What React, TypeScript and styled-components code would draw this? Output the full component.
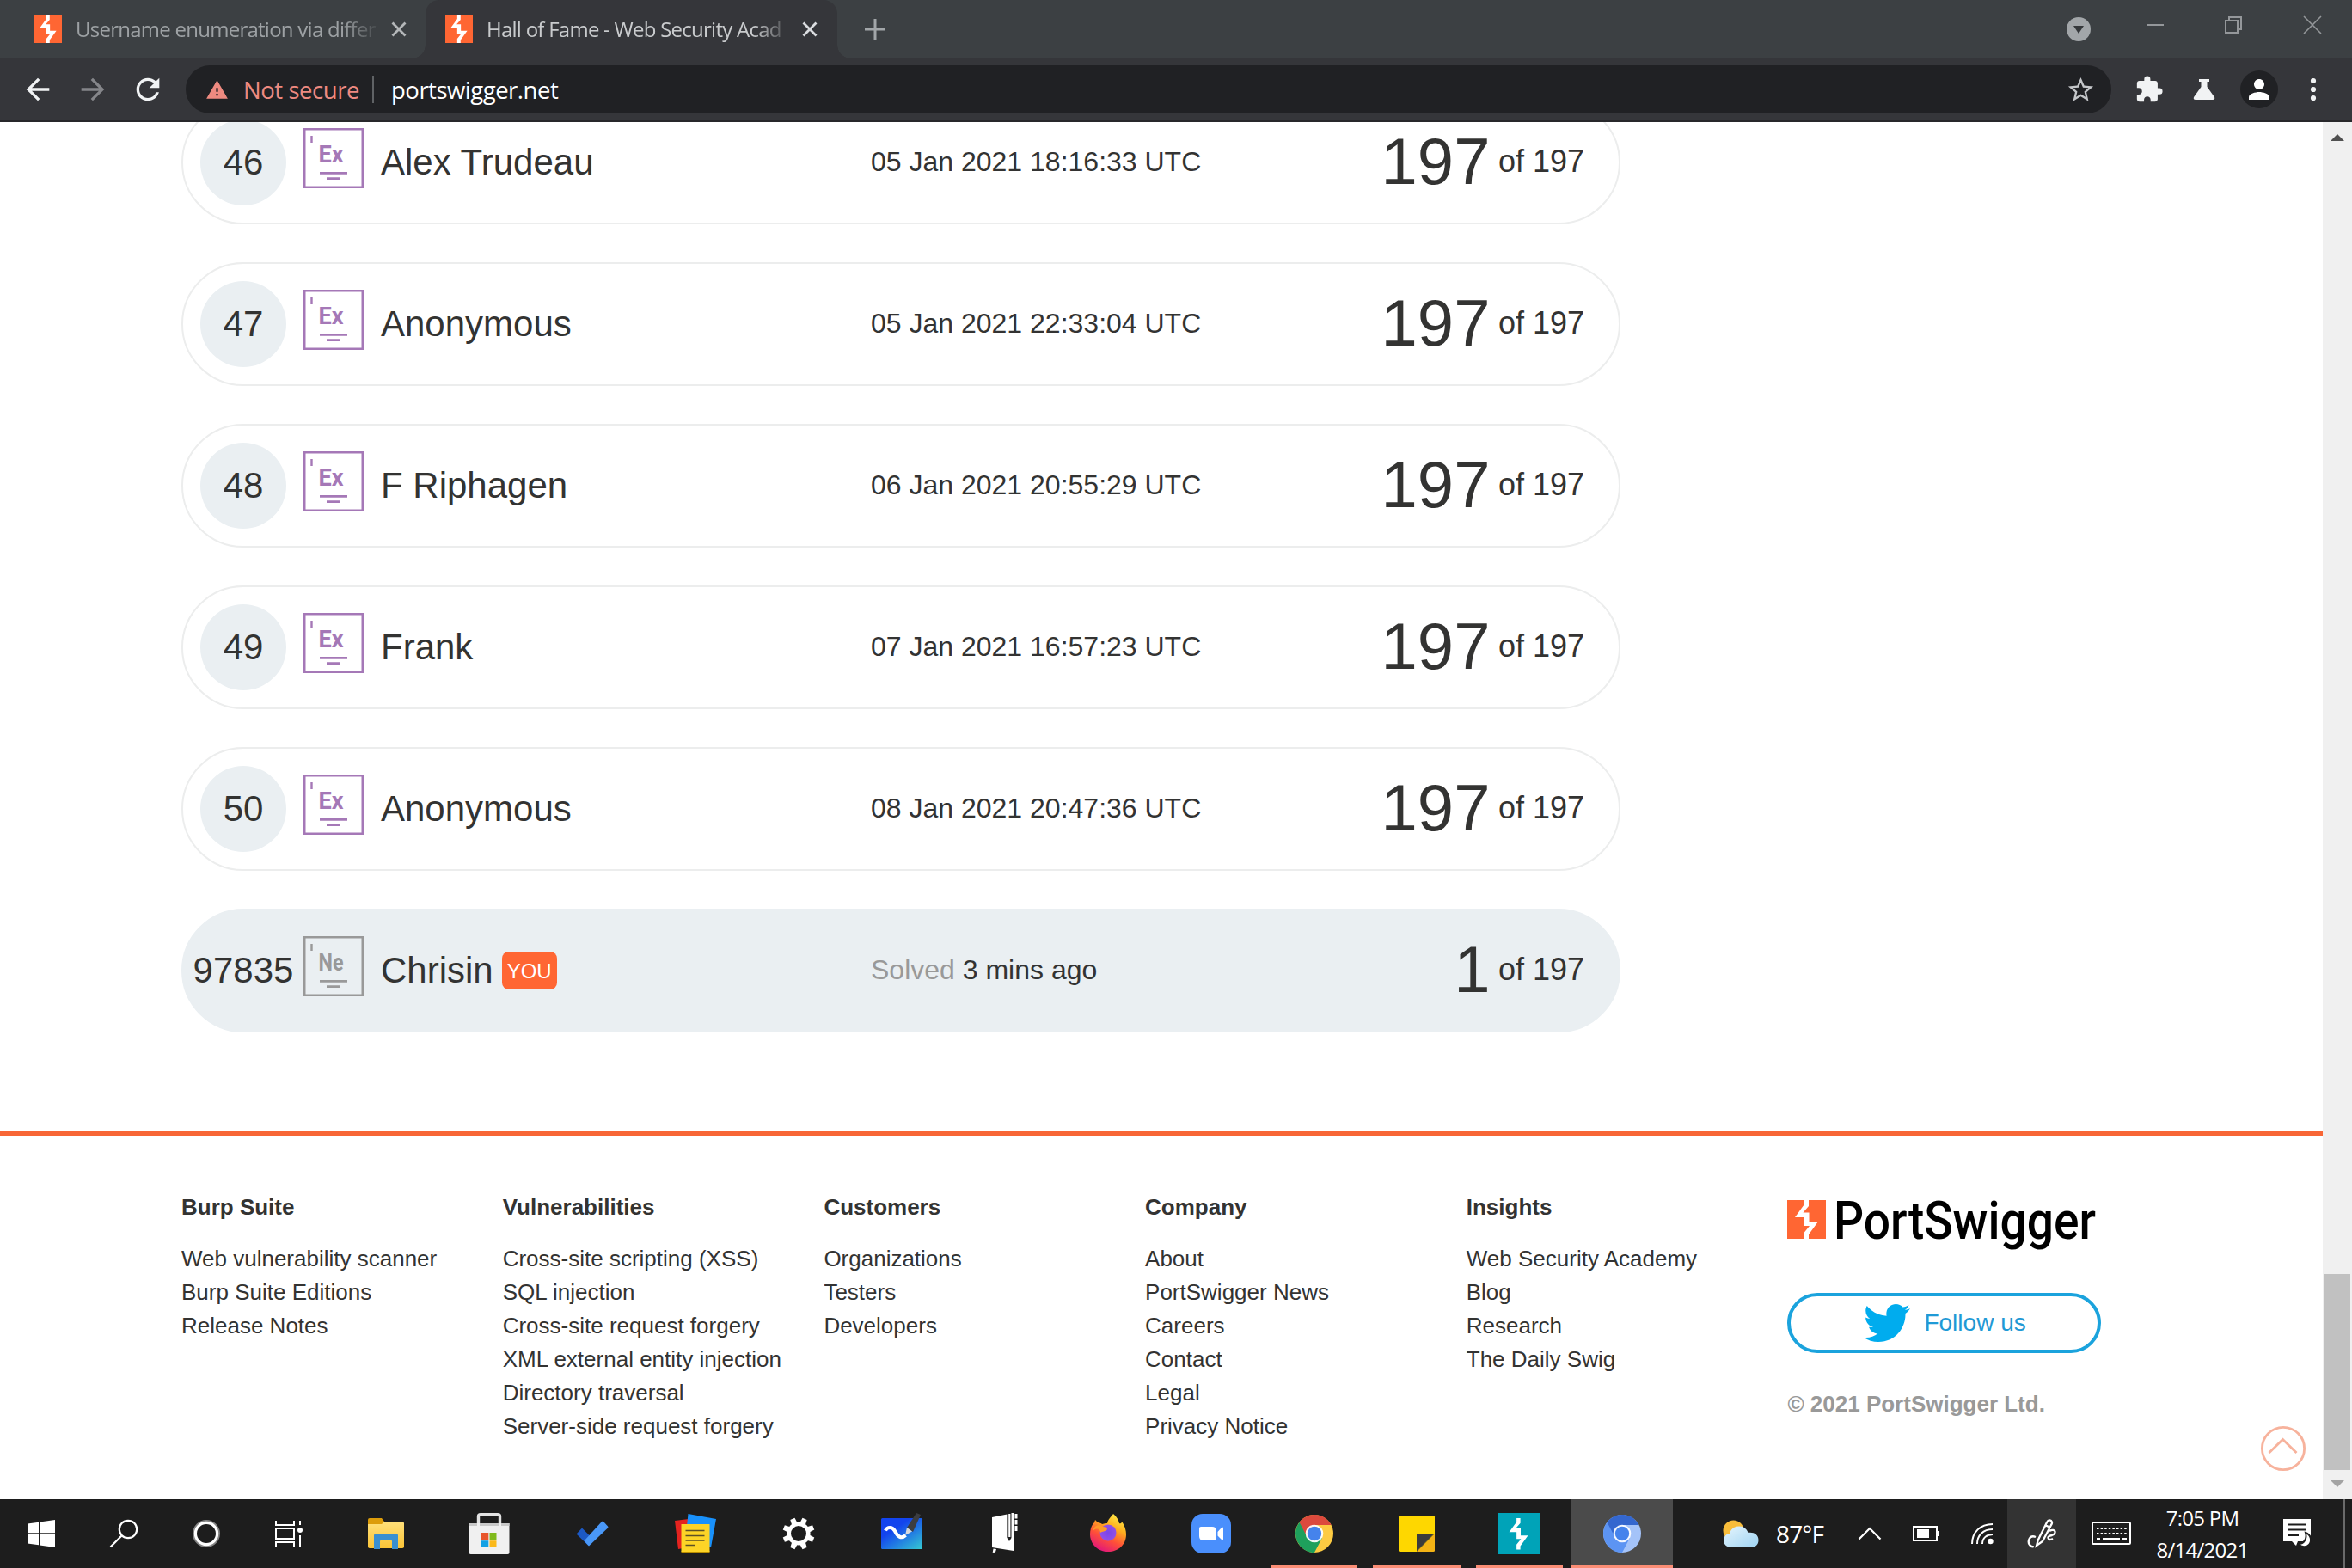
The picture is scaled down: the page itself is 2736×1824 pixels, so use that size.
import React from "react";
import styled, { createGlobalStyle, css } from "styled-components";
import { MdArrowBack, MdArrowForward, MdExtension, MdPerson, MdRefresh, MdStarBorder, MdWarning } from "react-icons/md";
import { FaTwitter } from "react-icons/fa";

const GlobalStyle = createGlobalStyle`
  *, *::before, *::after { box-sizing: border-box; }
  html, body { margin: 0; padding: 0; background: #fff; }
  svg { display: block; flex: none; overflow: visible; }
`;

const ui = css`
  font-family: "Open Sans", "Noto Sans", sans-serif;
  letter-spacing: -0.03em;
  white-space: nowrap;
`;

const Screen = styled.div`
  width: 2736px;
  height: 1824px;
  overflow: hidden;
  display: flex;
  flex-direction: column;
  font-family: "Liberation Sans", Arial, sans-serif;
  color: #333332;
`;

/* ---------- browser chrome ---------- */

const TabStrip = styled.div`
  height: 68px;
  flex: none;
  background: #3c4043;
  display: flex;
  align-items: stretch;
`;

const Tab = styled.div<{ $active?: boolean }>`
  position: relative;
  display: flex;
  align-items: center;
  width: ${(p) => (p.$active ? 479 : 495)}px;
  padding-left: ${(p) => (p.$active ? 23 : 40)}px;
  color: ${(p) => (p.$active ? "#c9cbcd" : "#9da1a4")};
  ${(p) =>
    p.$active &&
    css`
      background: #35363a;
      border-radius: 16px 16px 0 0;
      &::before,
      &::after {
        content: "";
        position: absolute;
        bottom: 0;
        width: 16px;
        height: 16px;
      }
      &::before {
        left: -16px;
        background: radial-gradient(circle at 0 0, transparent 15.5px, #35363a 16px);
      }
      &::after {
        right: -16px;
        background: radial-gradient(circle at 100% 0, transparent 15.5px, #35363a 16px);
      }
    `}
`;

const TabTitle = styled.div`
  ${ui}
  width: 352px;
  margin-left: 16px;
  font-size: 24px;
  line-height: 36px;
  letter-spacing: -0.031em;
  mask-image: linear-gradient(to right, #000 88%, transparent 101%);
`;

const TabClose = styled.div`
  margin-left: 15px;
`;

const NewTab = styled.div`
  display: flex;
  align-items: center;
  margin-left: 32px;
`;

const WindowButtons = styled.div`
  margin-left: auto;
  display: flex;
  padding: 19px 36px 0 0;
`;

const WindowButton = styled.div<{ $gap: number }>`
  margin-left: ${(p) => p.$gap}px;
`;

const Toolbar = styled.div`
  height: 74px;
  flex: none;
  background: #35363a;
  border-bottom: 2px solid #28282b;
  display: flex;
  align-items: center;
  padding-left: 24px;
`;

const NavButton = styled.div<{ $dim?: boolean }>`
  width: 40px;
  margin-right: 24px;
  color: ${(p) => (p.$dim ? "#85868a" : "#f1f3f4")};
`;

const Omnibox = styled.div`
  width: 2240px;
  height: 56px;
  border-radius: 28px;
  background: #202124;
  display: flex;
  align-items: center;
  padding: 0 18px 0 23px;
  font-size: 27.5px;
  color: #fff;
  ${ui}
`;

const NotSecure = styled.span`
  color: #ee8a80;
  margin-left: 17px;
  width: 150px;
  letter-spacing: -0.016em;
`;

const Address = styled.span`
  letter-spacing: -0.018em;
`;

const Divider = styled.span`
  width: 2px;
  height: 32px;
  background: #5f6265;
  margin-right: 20px;
`;

const Star = styled.div`
  margin-left: auto;
  color: #c4c6c9;
`;

const ToolbarIcons = styled.div`
  display: flex;
  align-items: center;
  color: #f1f3f4;
  padding-left: 27px;
`;

const Avatar = styled.div`
  width: 44px;
  height: 44px;
  margin: 0 37px 0 25px;
  border-radius: 50%;
  background: #202124;
  color: #fff;
  display: flex;
  align-items: center;
  justify-content: center;
`;

/* ---------- page ---------- */

const Viewport = styled.div`
  height: 1602px;
  flex: none;
  display: flex;
  overflow: hidden;
  background: #fff;
`;

const Page = styled.div`
  width: 2702px;
  position: relative;
`;

const Scrollbar = styled.div`
  width: 34px;
  background: #f0f0f0;
  display: flex;
  flex-direction: column;
  align-items: center;
  padding: 14px 0 14px;
`;

const Thumb = styled.div`
  margin-top: auto;
  width: 30px;
  height: 228px;
  background: #c1c1c1;
  margin-bottom: 12px;
`;

const Board = styled.div`
  display: flex;
  flex-direction: column;
  gap: 44px;
  width: 1674px;
  margin: -25px 0 115px 211px;
`;

const Row = styled.div<{ $you?: boolean }>`
  display: grid;
  grid-template-columns: 100px 70px 550px 400px 1fr;
  column-gap: 20px;
  align-items: center;
  height: 144px;
  padding: 0 40px 0 20px;
  border-radius: 72px;
  border: 2px solid ${(p) => (p.$you ? "#eaeff2" : "#eceded")};
  background: ${(p) => (p.$you ? "#eaeff2" : "#fff")};
`;

const Rank = styled.div`
  width: 100px;
  height: 100px;
  border-radius: 50%;
  background: #eaeff2;
  display: flex;
  align-items: center;
  justify-content: center;
  font-size: 42px;
`;

const Level = styled.div<{ $color: string }>`
  color: ${(p) => p.$color};
  margin-bottom: 10px;
`;

const Name = styled.div`
  display: flex;
  align-items: center;
  font-size: 42px;
`;

const You = styled.span`
  width: 64px;
  height: 44px;
  margin-left: 10px;
  border-radius: 8px;
  background: #ff6633;
  color: #fff;
  font-size: 24px;
  line-height: 46px;
  text-align: center;
`;

const When = styled.div`
  font-size: 32px;
  white-space: nowrap;
  margin-top: -1px;
`;

const Muted = styled.span`
  color: #999;
`;

const Score = styled.div`
  display: flex;
  align-items: center;
  justify-content: flex-end;
  gap: 9.5px;
  font-size: 36px;
  white-space: nowrap;
  margin-top: -2px;
`;

const Solved = styled.span`
  font-size: 76px;
  line-height: 90px;
`;

const Footer = styled.footer`
  border-top: 6px solid #f86636;
  display: grid;
  grid-template-columns: repeat(5, 373.7px) 366px;
  padding: 0 0 0 211px;
  height: 428px;
`;

const FooterColumn = styled.div`
  padding-top: 63px;
  font-size: 26px;
  line-height: 39px;
`;

const FooterTitle = styled.div`
  font-weight: bold;
  margin-bottom: 21px;
`;

const FooterLink = styled.div`
  white-space: nowrap;
`;

const Brand = styled.div`
  padding-top: 74px;
`;

const Logo = styled.div`
  display: flex;
  height: 60px;
  gap: 7px;
`;

const Follow = styled.div`
  width: 365px;
  height: 70px;
  margin-top: 48px;
  border: 4px solid #1ba3dd;
  border-radius: 35px;
  display: flex;
  align-items: center;
  padding-left: 85px;
  gap: 16px;
  font-size: 28px;
  color: #1f9ad6;
`;

const Copyright = styled.div`
  margin-top: 43px;
  font-size: 26px;
  line-height: 32px;
  font-weight: bold;
  color: #999;
`;

const ToTop = styled.div`
  position: absolute;
  right: 20px;
  bottom: 33px;
`;

/* ---------- taskbar ---------- */

const Taskbar = styled.div`
  height: 80px;
  flex: none;
  background: #1d1d1d;
  display: flex;
  color: #fff;
`;

const SystemButton = styled.div`
  width: 96px;
  display: flex;
  align-items: center;
  justify-content: center;
`;

const Apps = styled.div`
  display: flex;
  margin-left: 5px;
`;

const AppButton = styled.div<{ $state?: "running" | "focused" }>`
  width: ${(p) => (p.$state ? 119.4 : 120)}px;
  padding: ${(p) => (p.$state === "focused" ? "0 1px 0 1px" : "0 9px")};
  display: flex;
`;

const AppFace = styled.div<{ $state?: "running" | "focused" }>`
  flex: 1;
  display: flex;
  align-items: center;
  justify-content: center;
  padding-top: ${(p) => (p.$state ? 4 : 0)}px;
  background: ${(p) => (p.$state === "focused" ? "#4b4b4b" : "transparent")};
  border-bottom: ${(p) => (p.$state ? "4px solid #fb8d75" : "0")};
`;

const Tray = styled.div`
  display: flex;
  align-items: center;
  margin-left: auto;
`;

const Weather = styled.div`
  ${ui}
  display: flex;
  align-items: center;
  gap: 20px;
  width: 157px;
  font-size: 28px;
`;

const TrayIcon = styled.div<{ $w: number; $after?: number; $on?: boolean }>`
  width: ${(p) => p.$w}px;
  margin-right: ${(p) => p.$after ?? 0}px;
  height: 80px;
  display: flex;
  align-items: center;
  justify-content: center;
  background: ${(p) => (p.$on ? "#333" : "transparent")};
`;

const Clock = styled.div`
  ${ui}
  width: 126px;
  margin-left: 3px;
  text-align: center;
  font-size: 24px;
  line-height: 37px;
`;

const ShowDesktop = styled.div`
  width: 10px;
  height: 80px;
  border-left: 2px solid #6a6a6a;
`;

/* ---------- drawings ---------- */

const Bolt = ({ size, bg, inset }: { size: number; bg: string; inset?: boolean }) => (
  <svg width={size} height={size} viewBox="0 0 45 45">
    <rect width="45" height="45" fill={bg} />
    <path
      fill="#fff"
      transform={inset ? "translate(5 5.6) scale(.76)" : undefined}
      d="M19.5 0H25V7L18.5 14.5H25.5V25H36L25 40V45H19.5V38L26 30H19.5V20H9L19.5 5.5Z"
    />
  </svg>
);

const Cross = ({ color }: { color: string }) => (
  <svg width="18" height="18" viewBox="0 0 18 18" stroke={color} strokeWidth="2.8">
    <path d="M1.5 1.5L16.5 16.5M16.5 1.5L1.5 16.5" />
  </svg>
);

const LevelBadge = ({ label, color }: { label: string; color: string }) => (
  <Level $color={color}>
    <svg width="70" height="70" viewBox="0 0 70 70">
      <rect x="1.25" y="1.25" width="67.5" height="67.5" fill="none" stroke="currentColor" strokeWidth="2.5" />
      <path d="M9.5 9V17" stroke="currentColor" strokeWidth="2.4" />
      <text x="32" y="39.5" textAnchor="middle" fill="currentColor" fontFamily="Roboto, sans-serif" fontWeight="700" fontSize="28" textLength="29" lengthAdjust="spacingAndGlyphs">
        {label}
      </text>
      <path d="M19 52.3H51M27 58.7H43" stroke="currentColor" strokeWidth="2.8" />
    </svg>
  </Level>
);

const WindowsLogo = () => (
  <svg width="32" height="32" viewBox="0 0 32 32" fill="#fff">
    <path d="M0 4.6L13 2.7V15.3H0ZM14.3 2.5L32 0V15.3H14.3ZM0 16.6H13V29.2L0 27.4ZM14.3 16.6H32V32L14.3 29.4Z" />
  </svg>
);

const SearchGlyph = () => (
  <svg width="34" height="34" viewBox="0 0 34 34" fill="none" stroke="#fff" strokeWidth="2.2">
    <circle cx="22" cy="12" r="10.2" />
    <path d="M14.8 19.2L1.5 32.5" />
  </svg>
);

const CortanaRing = () => (
  <svg width="32" height="32" viewBox="0 0 32 32" fill="none">
    <circle cx="16" cy="16" r="14" stroke="#858585" strokeWidth="4" />
    <circle cx="16" cy="16" r="12.6" stroke="#fff" strokeWidth="3.2" />
  </svg>
);

const TaskView = () => (
  <svg width="34" height="32" viewBox="0 0 34 32" fill="none" stroke="#fff" strokeWidth="2">
    <path d="M2 1V6H23V1M2 31V26H23V31M2 10H23V22H2ZM30 1V6M30 18V31" />
    <circle cx="30" cy="12" r="3" fill="#fff" stroke="none" />
  </svg>
);

const Folder = () => (
  <svg width="42" height="36" viewBox="0 0 42 36">
    <defs>
      <linearGradient id="fold" x2="0" y2="1">
        <stop stopColor="#ffe07a" />
        <stop offset="1" stopColor="#fbc436" />
      </linearGradient>
    </defs>
    <path fill="#dc9c0b" d="M0 2Q0 0 2 0H16L19 4V10H0Z" />
    <path fill="url(#fold)" d="M0 7H16L19 4H40Q42 4 42 6V33Q42 35 40 35H2Q0 35 0 33Z" />
    <path fill="#3a8fd0" d="M7 36V20Q7 18 9 18H33Q35 18 35 20V36H28V27Q28 25 26 25H16Q14 25 14 27V36Z" />
  </svg>
);

const Store = () => (
  <svg width="48" height="48" viewBox="0 0 48 48">
    <path d="M11.5 16V4Q11.5 1.8 14 1.8H34Q36.5 1.8 36.5 4V16" fill="none" stroke="#e3e3e3" strokeWidth="3.4" />
    <path fill="#f0f0f0" d="M.5 12H47.5V46Q47.5 48 45.5 48H2.5Q.5 48 .5 46Z" />
    <path fill="#c9c9c9" d="M.5 12H10V15H.5ZM13 12H35V15H13ZM38 12H47.5V15H38Z" />
    <path fill="#e8562c" d="M15 23H23.3V31H15Z" />
    <path fill="#80ba1c" d="M24.5 23H32.5V31H24.5Z" />
    <path fill="#14a1e4" d="M15 32.2H23.3V40H15Z" />
    <path fill="#fbb91a" d="M24.5 32.2H32.5V40H24.5Z" />
  </svg>
);

const Todo = () => (
  <svg width="38" height="30" viewBox="0 0 38 30">
    <path fill="#1c59c5" d="M.5 15.5L7 8.500L20.500 22L14.500 29Z" />
    <path fill="#4a98f8" d="M9.500 23.500L30 1Q31 .2 32 1L37 6.500Q37.800 7.500 37 8.500L15 29.500Z" />
  </svg>
);

const Notes = () => (
  <svg width="48" height="46" viewBox="0 0 48 46">
    <path fill="#e5231f" d="M0 8L16 6L20 38L4 41Z" />
    <path fill="#1991fb" d="M15.5 0L48 6L42 39L12 33Z" />
    <path fill="#b98d00" d="M7.5 43H40.5V45.5H7.5Z" />
    <path fill="#fdd426" d="M7.5 12H40.5V44H7.5Z" />
    <path d="M12.5 19.5H34.5M12.5 25.5H34.5M12.5 31H34.5M12.5 36.5H23.5" stroke="#5e5126" strokeWidth="1.6" />
  </svg>
);

const Gear = () => (
  <svg width="36" height="36" viewBox="-18 -18 36 36" fill="#fff">
    <circle r="11.3" fill="none" stroke="#fff" strokeWidth="4.6" />
    {[22.5, 67.5, 112.5, 157.5, 202.5, 247.5, 292.5, 337.5].map((a) => (
      <path key={a} transform={`rotate(${a})`} d="M-3.4 -12L-2.8 -18.6H2.8L3.4 -12Z" />
    ))}
  </svg>
);

const Whiteboard = () => (
  <svg width="48" height="48" viewBox="0 0 48 48">
    <defs>
      <linearGradient id="wb" x1="0.1" x2="1" y2="1">
        <stop offset=".3" stopColor="#1344ee" />
        <stop offset="1" stopColor="#36cbd2" />
      </linearGradient>
    </defs>
    <rect y="6" width="48" height="36" rx="1.5" fill="url(#wb)" />
    <path d="M5 20.5C7 16 13 15.5 16 21C19 27 23 31 28.5 26" fill="none" stroke="#fff" strokeWidth="4" />
    <path fill="#3c3d41" d="M41 0L46 2L37 22L30 17Z" />
    <path fill="#d7dadd" d="M30 17L36 21.5L28 26Z" />
  </svg>
);

const Journal = () => (
  <svg width="30" height="48" viewBox="0 0 30 48" fill="#fff">
    <path d="M0 5L17.5 1.5V29L20 33L22.5 29V0H25V44L0 40Z" />
    <path d="M19.2 1H21.4V28H19.2ZM26.5 1H29.5V6.5H26.5ZM26.5 8H29.5V13.5H26.5ZM26.5 15H29.5V21H26.5ZM1.5 41.5L5 42L3.5 47L2 45.5L.5 47Z" />
    <path fill="#1d1d1d" d="M17.7 1H18.8V29H17.7Z" />
  </svg>
);

const Firefox = () => (
  <svg width="42" height="46" viewBox="0 0 42 46">
    <defs>
      <linearGradient id="ff" x1=".8" y1="0" x2=".3" y2="1">
        <stop stopColor="#fff04a" />
        <stop offset=".35" stopColor="#ffae1e" />
        <stop offset=".65" stopColor="#ff5038" />
        <stop offset="1" stopColor="#e0147e" />
      </linearGradient>
      <radialGradient id="ffp">
        <stop stopColor="#7a45e8" />
        <stop offset="1" stopColor="#9150e8" />
      </radialGradient>
    </defs>
    <path fill="url(#ff)" d="M27 0C31 3 33 7 34 11C36 12 37 10 37 9C40 13 42 19 42 24C42 36 33 44 21 44C9 44 0 35 0 24C0 18 2 13 5 10L6 7L9 10C11 10 13 11 14 12C17 11 20 11 20 11C21 6 24 4 27 0Z" />
    <circle cx="21" cy="22" r="9.5" fill="url(#ffp)" />
    <path fill="#ff9a28" d="M3 20C6 11 13 13 15 15C18 15 20 16.500 20 18C18 21 14 20 12 22C12 17 7 16 3 20Z" />
  </svg>
);

const ZoomApp = () => (
  <svg width="46" height="46" viewBox="0 0 46 46">
    <rect width="46" height="46" rx="13" fill="#4a8ffc" />
    <path fill="#fff" d="M9 17Q9 15 11 15H24Q29 15 29 20V29Q29 31 27 31H14Q9 31 9 26ZM30.5 21L35 16Q37 14.5 37 17V29Q37 31.5 35 30L30.5 25.5Z" />
  </svg>
);

const ChromeLogo = ({ top, left, right }: { top: string; left: string; right: string }) => (
  <svg width="44" height="44" viewBox="-22 -22 44 44">
    <circle r="22" fill={right} />
    <path fill={left} d="M-17.5 -13.300A22 22 0 0 0 0 22L9 5L0 0Z" />
    <path fill={top} d="M-17.500 -13.300A22 22 0 0 1 19.600 -10H0V0L-9 3Z" />
    <circle r="10.3" fill="#fff" opacity=".93" />
    <circle r="8.2" fill="#4583ec" />
  </svg>
);

const Sticky = () => (
  <svg width="42" height="42" viewBox="0 0 42 42">
    <path fill="#fed700" d="M1.5 0H40.5Q42 0 42 1.5V21L21 42H1.5Q0 42 0 40.5V1.5Q0 0 1.5 0Z" />
    <path fill="#f3b315" d="M42 21V40.5Q42 42 40.5 42H21Z" />
    <path fill="#3b3b3b" d="M21 21H41.5L21 41.5Z" />
  </svg>
);

const Sun = () => (
  <svg width="42" height="32" viewBox="0 0 42 32">
    <defs>
      <linearGradient id="cl" x2="1" y2="1">
        <stop stopColor="#e6f5fd" />
        <stop offset="1" stopColor="#9fd4f3" />
      </linearGradient>
    </defs>
    <circle cx="12.5" cy="12.5" r="12" fill="#f9bd3a" />
    <path fill="url(#cl)" d="M10 32C4 32 1 28 1 23.5C1 19.5 4 16.5 8 16C9 11 13 7.5 19 7.5C25 7.5 28 11 29.5 15C36 14 41.5 17 41.5 23.5C41.5 29 38 32 33 32Z" />
  </svg>
);

const Caret = () => (
  <svg width="28" height="16" viewBox="0 0 28 16" fill="none" stroke="#fff" strokeWidth="2.2">
    <path d="M1.5 14.5L14 2L26.5 14.5" />
  </svg>
);

const Battery = () => (
  <svg width="32" height="20" viewBox="0 0 32 20" fill="none" stroke="#fff" strokeWidth="2">
    <path d="M1 2H28V18H1ZM30 7V13" />
    <path fill="#fff" stroke="none" d="M5 5H19V15H5Z" />
  </svg>
);

const Wifi = () => (
  <svg width="26" height="26" viewBox="0 0 26 26" fill="none" stroke="#fff" strokeWidth="2">
    <path d="M1 25C1 12 10 2 25 2M7 25C7 15 14 8 25 8M13 25C13 18 18 14 25 14" />
    <circle cx="22.5" cy="22" r="3.2" fill="#fff" stroke="none" />
  </svg>
);

const Pen = () => (
  <svg width="34" height="34" viewBox="0 0 34 34" fill="none" stroke="#fff" strokeWidth="2.3">
    <path d="M11 31L13 24L23 4Q25 0 28 2Q30 4 28 7L18 26L11 31ZM21 7L27 10M10 21C3 18 0 26 3 30Q5 33 8 32M26 14C33 10 35 17 29 19Q23 20 25 23Q26 25 30 23" />
  </svg>
);

const Keyboard = () => (
  <svg width="46" height="28" viewBox="0 0 46 28" fill="none" stroke="#fff" strokeWidth="2">
    <rect x="1" y="1" width="44" height="25" rx="1" />
    <path d="M6 8H41M6 14H41" strokeDasharray="2.5 2.1" />
    <path d="M6 20H10M13 20H33M36 20H41" />
  </svg>
);

const Notification = () => (
  <svg width="34" height="34" viewBox="0 0 34 34">
    <path fill="#fff" d="M0 0H32V26H17L15 31L10 26H0Z" />
    <path d="M6 6.5H26M6 12.5H26M6 19H18" stroke="#1d1d1d" strokeWidth="2" />
    <path d="M26 16C32 18 34 25 30 30C27 33 21 33 18 29C24 29 28 23 26 16Z" fill="#fff" stroke="#1d1d1d" strokeWidth="2" />
  </svg>
);

/* ---------- data ---------- */

const entries = [
  { rank: 46, name: "Alex Trudeau", when: "05 Jan 2021 18:16:33 UTC" },
  { rank: 47, name: "Anonymous", when: "05 Jan 2021 22:33:04 UTC" },
  { rank: 48, name: "F Riphagen", when: "06 Jan 2021 20:55:29 UTC" },
  { rank: 49, name: "Frank", when: "07 Jan 2021 16:57:23 UTC" },
  { rank: 50, name: "Anonymous", when: "08 Jan 2021 20:47:36 UTC" },
];

const columns = [
  { title: "Burp Suite", links: ["Web vulnerability scanner", "Burp Suite Editions", "Release Notes"] },
  {
    title: "Vulnerabilities",
    links: [
      "Cross-site scripting (XSS)",
      "SQL injection",
      "Cross-site request forgery",
      "XML external entity injection",
      "Directory traversal",
      "Server-side request forgery",
    ],
  },
  { title: "Customers", links: ["Organizations", "Testers", "Developers"] },
  { title: "Company", links: ["About", "PortSwigger News", "Careers", "Contact", "Legal", "Privacy Notice"] },
  { title: "Insights", links: ["Web Security Academy", "Blog", "Research", "The Daily Swig"] },
];

const apps: { icon: React.ReactNode; state?: "running" | "focused" }[] = [
  { icon: <Folder /> },
  { icon: <Store /> },
  { icon: <Todo /> },
  { icon: <Notes /> },
  { icon: <Gear /> },
  { icon: <Whiteboard /> },
  { icon: <Journal /> },
  { icon: <Firefox /> },
  { icon: <ZoomApp /> },
  { icon: <ChromeLogo top="#dc4a3d" left="#1ea05c" right="#fdcb42" />, state: "running" },
  { icon: <Sticky />, state: "running" },
  { icon: <Bolt size={48} bg="#00a3b8" inset />, state: "running" },
  { icon: <ChromeLogo top="#3467cf" left="#5c94f3" right="#a4c3f9" />, state: "focused" },
];

export default function App() {
  return (
    <Screen>
      <GlobalStyle />
      <TabStrip>
        <Tab>
          <Bolt size={32} bg="#ff6633" />
          <TabTitle>Username enumeration via differ</TabTitle>
          <TabClose>
            <Cross color="#b4b7b9" />
          </TabClose>
        </Tab>
        <Tab $active>
          <Bolt size={32} bg="#ff6633" />
          <TabTitle>Hall of Fame - Web Security Acad</TabTitle>
          <TabClose>
            <Cross color="#dadcdf" />
          </TabClose>
        </Tab>
        <NewTab>
          <svg width="24" height="24" viewBox="0 0 24 24" stroke="#a2a6a9" strokeWidth="3">
            <path d="M12 0V24M0 12H24" />
          </svg>
        </NewTab>
        <WindowButtons>
          <WindowButton $gap={0}>
            <svg width="28" height="30" viewBox="0 0 28 30">
              <circle cx="14" cy="15" r="14" fill="#a2a6a9" />
              <path fill="#35383b" d="M8 11H20L14 20Z" />
            </svg>
          </WindowButton>
          <WindowButton $gap={65}>
            <svg width="20" height="20" viewBox="0 0 20 20" stroke="#94979a" strokeWidth="2">
              <path d="M0 10H20" />
            </svg>
          </WindowButton>
          <WindowButton $gap={71}>
            <svg width="20" height="20" viewBox="0 0 20 20" fill="none" stroke="#94979a" strokeWidth="2">
              <path d="M1 5H15V19H1ZM5 5V1H19V15H15" />
            </svg>
          </WindowButton>
          <WindowButton $gap={72}>
            <svg width="20" height="20" viewBox="0 0 20 20" stroke="#94979a" strokeWidth="1.6">
              <path d="M0 0L20 20M20 0L0 20" />
            </svg>
          </WindowButton>
        </WindowButtons>
      </TabStrip>

      <Toolbar>
        <NavButton>
          <MdArrowBack size={40} />
        </NavButton>
        <NavButton $dim>
          <MdArrowForward size={40} />
        </NavButton>
        <NavButton>
          <MdRefresh size={40} />
        </NavButton>
        <Omnibox>
          <MdWarning size={27} color="#ee8a80" />
          <NotSecure>Not secure</NotSecure>
          <Divider />
          <Address>portswigger.net</Address>
          <Star>
            <MdStarBorder size={35} />
          </Star>
        </Omnibox>
        <ToolbarIcons>
          <MdExtension size={34} />
          <svg width="64" height="24" viewBox="-35 0 64 24" fill="#f1f3f4">
            <path d="M6 0H18V3H15.5V9L24 21Q25 24 22 24H2Q-1 24 0 21L8.5 9V3H6Z" />
          </svg>
          <Avatar>
            <MdPerson size={36} />
          </Avatar>
          <svg width="8" height="28" viewBox="0 0 8 28" fill="#f1f3f4">
            <circle cx="4" cy="4" r="3.1" />
            <circle cx="4" cy="14" r="3.1" />
            <circle cx="4" cy="24" r="3.1" />
          </svg>
        </ToolbarIcons>
      </Toolbar>

      <Viewport>
        <Page>
          <Board>
            {entries.map((e) => (
              <Row key={e.rank}>
                <Rank>{e.rank}</Rank>
                <LevelBadge label="Ex" color="#a578b7" />
                <Name>{e.name}</Name>
                <When>{e.when}</When>
                <Score>
                  <Solved>197</Solved>
                  <span>of 197</span>
                </Score>
              </Row>
            ))}
            <Row $you>
              <Rank>97835</Rank>
              <LevelBadge label="Ne" color="#999999" />
              <Name>
                Chrisin <You>YOU</You>
              </Name>
              <When>
                <Muted>Solved</Muted> 3 mins ago
              </When>
              <Score>
                <Solved>1</Solved>
                <span>of 197</span>
              </Score>
            </Row>
          </Board>
          <Footer>
            {columns.map((c) => (
              <FooterColumn key={c.title}>
                <FooterTitle>{c.title}</FooterTitle>
                {c.links.map((l) => (
                  <FooterLink key={l}>{l}</FooterLink>
                ))}
              </FooterColumn>
            ))}
            <Brand>
              <Logo>
                <Bolt size={45} bg="#ff6633" />
                <svg width="312" height="60" viewBox="0 0 312 60">
                  <text x="2" y="45" textLength="305" lengthAdjust="spacingAndGlyphs" fontFamily="Roboto, sans-serif" fontWeight="500" fontSize="61" fill="#000">
                    PortSwigger
                  </text>
                </svg>
              </Logo>
              <Follow>
                <FaTwitter size={54} color="#00acee" />
                Follow us
              </Follow>
              <Copyright>© 2021 PortSwigger Ltd.</Copyright>
            </Brand>
          </Footer>
          <ToTop>
            <svg width="52" height="52" viewBox="0 0 52 52" fill="none" stroke="#f7b29c" strokeWidth="2.8">
              <circle cx="26" cy="26" r="24.6" />
              <path d="M9.5 31L25.5 15.5L41.5 31" />
            </svg>
          </ToTop>
        </Page>
        <Scrollbar>
          <svg width="16" height="8" viewBox="0 0 16 8" fill="#505050">
            <path d="M0 8L8 0L16 8Z" />
          </svg>
          <Thumb />
          <svg width="16" height="8" viewBox="0 0 16 8" fill="#a3a3a3">
            <path d="M0 0L8 8L16 0Z" />
          </svg>
        </Scrollbar>
      </Viewport>

      <Taskbar>
        <SystemButton>
          <WindowsLogo />
        </SystemButton>
        <SystemButton>
          <SearchGlyph />
        </SystemButton>
        <SystemButton>
          <CortanaRing />
        </SystemButton>
        <SystemButton>
          <TaskView />
        </SystemButton>
        <Apps>
          {apps.map((a, i) => (
            <AppButton key={i} $state={a.state}>
              <AppFace $state={a.state}>{a.icon}</AppFace>
            </AppButton>
          ))}
        </Apps>
        <Tray>
          <Weather>
            <Sun />
            <span>87°F</span>
          </Weather>
          <TrayIcon $w={28}>
            <Caret />
          </TrayIcon>
          <TrayIcon $w={104}>
            <Battery />
          </TrayIcon>
          <TrayIcon $w={26} $after={16}>
            <Wifi />
          </TrayIcon>
          <TrayIcon $w={80} $on>
            <Pen />
          </TrayIcon>
          <TrayIcon $w={81}>
            <Keyboard />
          </TrayIcon>
          <Clock>
            <div>7:05 PM</div>
            <div>8/14/2021</div>
          </Clock>
          <TrayIcon $w={95} $after={6}>
            <Notification />
          </TrayIcon>
          <ShowDesktop />
        </Tray>
      </Taskbar>
    </Screen>
  );
}
